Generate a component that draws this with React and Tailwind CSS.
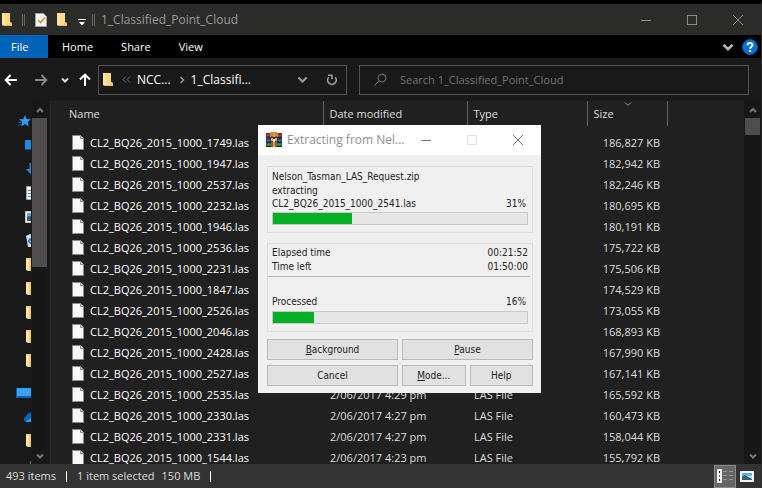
import React from "react";

const files = [
  { id: "1749", size: "186,827" },
  { id: "1947", size: "182,942" },
  { id: "2537", size: "182,246" },
  { id: "2232", size: "180,695" },
  { id: "1946", size: "180,191" },
  { id: "2536", size: "175,722" },
  { id: "2231", size: "175,506" },
  { id: "1847", size: "174,529" },
  { id: "2526", size: "173,055" },
  { id: "2046", size: "168,893" },
  { id: "2428", size: "167,990" },
  { id: "2527", size: "167,141" },
  { id: "2535", size: "165,592", date: "2/06/2017 4:29 pm", type: "LAS File" },
  { id: "2330", size: "160,473", date: "2/06/2017 4:27 pm", type: "LAS File" },
  { id: "2331", size: "158,044", date: "2/06/2017 4:27 pm", type: "LAS File" },
  { id: "1544", size: "155,792", date: "2/06/2017 4:23 pm", type: "LAS File" },
];

function Folder() {
  return (
    <svg width="12" height="14" viewBox="0 0 12 14" aria-hidden="true">
      <path d="M1 0h8v9l2 1v3H4l-3-1z" fill="#e9b960" />
      <path d="M1 0h8v12H1z" fill="#fbd98b" />
      <path d="M1 0l3 2v11l-3-1z" fill="#ffe3a0" />
      <path d="M9 9l2 1v3H8z" fill="#f3c46c" />
    </svg>
  );
}

function FileIcon() {
  return (
    <svg width="12" height="15" viewBox="0 0 12 15" className="shrink-0" aria-hidden="true">
      <path d="M.5.5h8l3 3v11H.5z" fill="#f8f8f8" stroke="#8d8d8d" />
      <path d="M8.5.5v3h3" fill="#d5d5d5" stroke="#8d8d8d" />
    </svg>
  );
}

function Chevron({ up = false, size = 8, width = 2, className = "" }) {
  return (
    <svg width={size} height={size} viewBox="0 0 8 8" className={className} aria-hidden="true">
      <path d={up ? "M1 6l3-3 3 3" : "M1 2.5l3 3 3-3"} fill="none" stroke="currentColor" strokeWidth={width} />
    </svg>
  );
}

function Arrow({ dir }) {
  return (
    <svg width="14" height="14" viewBox="0 0 14 14" aria-hidden="true">
      <g transform={dir === "right" ? "rotate(180 7 7)" : dir === "up" ? "rotate(90 7 7)" : undefined}>
        <path d="M13 7H2M6.5 2L1.700 7l4.800 5" fill="none" stroke="currentColor" strokeWidth="2" />
      </g>
    </svg>
  );
}

function Grip() {
  return <span className="h-3 w-[3px] border-x border-[#666]" />;
}

function TitleBar() {
  return (
    <header className="flex h-[31px] items-center bg-[#2b2b2a]">
      <div className="flex items-center pl-px">
        <Folder />
        <span className="ml-[9px] flex"><Grip /></span>
        <button aria-label="Properties" className="ml-[10px]">
          <svg width="12" height="14" viewBox="0 0 12 14">
            <path d="M.5.5h8l3 3v10H.5z" fill="#f6f6f6" stroke="#a0a0a0" />
            <path d="M3 7l2.500 2.500L10 4.500" fill="none" stroke="#e08a2c" strokeWidth="1.600" />
          </svg>
        </button>
        <button aria-label="New folder" className="ml-[9px]"><Folder /></button>
        <button aria-label="Customize Quick Access Toolbar" className="ml-[10px] pt-1 text-white">
          <svg width="8" height="8" viewBox="0 0 8 8">
            <path d="M0 1.500h8" stroke="currentColor" />
            <path d="M1 4h6L4 7.500z" fill="currentColor" />
          </svg>
        </button>
        <span className="ml-[6px] flex"><Grip /></span>
      </div>
      <h1 className="ml-[6px] flex-1 text-[12px] leading-4 text-[#9a9a9a]">1_Classified_Point_Cloud</h1>
      <div className="flex text-[#8c8c8c]">
        <button aria-label="Minimize" className="flex h-[31px] w-[46px] items-center justify-center">
          <svg width="10" height="10"><path d="M0 5.500h10" stroke="currentColor" /></svg>
        </button>
        <button aria-label="Maximize" className="flex h-[31px] w-[46px] items-center justify-center">
          <svg width="10" height="10"><rect x=".5" y=".5" width="9" height="9" fill="none" stroke="currentColor" /></svg>
        </button>
        <button aria-label="Close" className="flex h-[31px] w-[46px] items-center justify-center">
          <svg width="10" height="10"><path d="M0 0l10 10M10 0L0 10" stroke="currentColor" /></svg>
        </button>
      </div>
    </header>
  );
}

function Ribbon() {
  return (
    <nav className="flex h-[23px] items-center bg-black pr-[3px]">
      <a href="#file" className="flex h-full w-12 items-center bg-[#0063b8] pl-[11px]">File</a>
      <a href="#home" className="ml-[14px]">Home</a>
      <a href="#share" className="ml-7">Share</a>
      <a href="#view" className="ml-7">View</a>
      <button aria-label="Expand ribbon" className="ml-auto text-[#b4b4b4]"><Chevron size={12} width={1.7} /></button>
      <button aria-label="Help" className="ml-2">
        <svg width="16" height="16" viewBox="0 0 16 16">
          <circle cx="8" cy="8" r="7.500" fill="#0a6fc9" stroke="#0b58a0" />
          <path d="M5.600 6.200c0-3 4.900-3 4.900-.2 0 1.700-2.400 1.800-2.400 3.700" fill="none" stroke="#fff" strokeWidth="1.900" />
          <rect x="7.100" y="11" width="2" height="2" fill="#fff" />
        </svg>
      </button>
    </nav>
  );
}

function AddressRow() {
  return (
    <div className="flex h-[43px] items-center pr-3">
      <div className="flex w-[98px] items-center pl-1">
        <button aria-label="Back" className="text-white"><Arrow dir="left" /></button>
        <button aria-label="Forward" className="ml-4 text-[#8b8585]"><Arrow dir="right" /></button>
        <button aria-label="Recent locations" className="ml-[13px] text-[#dcdcdc]"><Chevron /></button>
        <button aria-label="Up" className="ml-[9px] text-white"><Arrow dir="up" /></button>
      </div>
      <div className="flex h-[30px] w-[249px] items-center border border-[#535353] pl-[3px] pr-2">
        <Folder />
        <svg width="9" height="7" viewBox="0 0 9 7" className="ml-2 text-[#6f6f6f]" aria-hidden="true">
          <path d="M4 .5l-3 3 3 3M8 .5l-3 3 3 3" fill="none" stroke="currentColor" />
        </svg>
        <a href="#ncc" className="ml-[6px] text-[12px]">NCC...</a>
        <span className="ml-[7px] flex -rotate-90 text-[#9a9a9a]"><Chevron size={8} width={1.5} /></span>
        <a href="#classified" className="ml-[5px] text-[12px]">1_Classifi...</a>
        <button aria-label="Previous locations" className="ml-auto text-[#9a9a9a]"><Chevron size={11} width={1.5} /></button>
        <button aria-label="Refresh" className="ml-[18px] text-[#9a9a9a]">
          <svg width="12" height="12" viewBox="0 0 12 12">
            <path d="M2.700 3.300a4.300 4.300 0 1 0 6.500 0" fill="none" stroke="currentColor" strokeWidth="1.700" />
            <path d="M2 1.200h4v4" fill="none" stroke="currentColor" strokeWidth="1.600" />
          </svg>
        </button>
      </div>
      <label className="ml-3 flex h-[30px] flex-1 items-center border border-[#535353] pl-[14px]">
        <svg width="13" height="13" viewBox="0 0 13 13" className="text-[#77717f]" aria-hidden="true">
          <circle cx="8" cy="5" r="4" fill="none" stroke="currentColor" />
          <path d="M5 8L.5 12.500" stroke="currentColor" />
        </svg>
        <input
          type="search"
          aria-label="Search 1_Classified_Point_Cloud"
          placeholder="Search 1_Classified_Point_Cloud"
          className="ml-[13px] min-w-0 flex-1 bg-transparent text-[11px] outline-none placeholder:text-[#777177]"
        />
      </label>
    </div>
  );
}

function QuickIcon({ kind }) {
  if (kind === "folder") {
    return (
      <svg width="14" height="14" viewBox="0 0 14 14" className="ml-[26px] shrink-0">
        <path d="M0 0h12v13H4L0 12z" fill="#f2c877" />
        <path d="M0 0l3 2v11l-3-1z" fill="#ffe7ab" />
      </svg>
    );
  }
  if (kind === "star") {
    return (
      <svg width="14" height="14" viewBox="0 0 14 14" className="ml-[18px] shrink-0">
        <path d="M7 1l1.700 4 4.300.3-3.300 2.700 1.100 4.500L7 10l-3.800 2.500L4.300 8 1 5.300 5.300 5z" fill="#2f9bf0" />
        <path d="M0 9l3-1M0 12l3-2" stroke="#1c5fa5" />
      </svg>
    );
  }
  if (kind === "desktop") {
    return <svg width="14" height="14" viewBox="0 0 14 14" className="ml-[25px] shrink-0"><path d="M0 2h14v10H0z" fill="#1d8ae6" /><path d="M0 11h14v1H0z" fill="#0b4f98" /></svg>;
  }
  if (kind === "download") {
    return <svg width="12" height="14" viewBox="0 0 12 14" className="ml-[26px] shrink-0"><path d="M3.500 1h4v6H11l-5.500 6L0 7h3.500z" fill="#2c86d9" /></svg>;
  }
  if (kind === "document") {
    return (
      <svg width="12" height="14" viewBox="0 0 12 14" className="ml-[26px] shrink-0">
        <path d="M.5.5h11v13H.5z" fill="#f4f4f4" stroke="#a5a5a5" />
        <path d="M2 4.500h8M2 7.500h8M2 10.500h8" stroke="#4a90c8" />
      </svg>
    );
  }
  if (kind === "picture") {
    return (
      <svg width="14" height="12" viewBox="0 0 14 12" className="ml-[25px] shrink-0">
        <path d="M.5.5h13v11H.5z" fill="#f4f4f4" stroke="#c5c5c5" />
        <path d="M2 2h10v8H2z" fill="#5aa9dc" />
        <path d="M2 6l3-1 7 3v2H2z" fill="#2e5d6b" />
      </svg>
    );
  }
  if (kind === "recycle") {
    return (
      <svg width="12" height="14" viewBox="0 0 12 14" className="ml-[26px] shrink-0">
        <path d="M0 2l4-2 7 2-1 11H2z" fill="#d9dde0" />
        <path d="M2 8l2-3 2 2M3 8l3 2" stroke="#1e78d0" strokeWidth="1.600" fill="none" />
      </svg>
    );
  }
  if (kind === "pc") {
    return <svg width="16" height="12" viewBox="0 0 16 12" className="ml-4 shrink-0"><path d="M0 1h16v10H0z" fill="#1161ad" /><path d="M1 1h15v8H1z" fill="#35a2f3" /></svg>;
  }
  if (kind === "network") {
    return <svg width="14" height="14" viewBox="0 0 14 14" className="ml-[30px] shrink-0"><path d="M0 3h12v10H0z" fill="#2b7fc9" /></svg>;
  }
  return <svg width="16" height="12" viewBox="0 0 16 12" className="ml-6 shrink-0"><path d="M3 11C-1 11-1 6 2 5.500 3 2 6 1 9 1v10z" fill="#0a63b5" /><path d="M1 11l7-5v5z" fill="#2e9af0" /></svg>;
}

const quickAccess = ["star", "desktop", "download", "document", "picture", "recycle", "folder", "folder", "folder", "folder", "folder"];
const locations = ["pc", "cloud", "folder", "network"];

function Sidebar() {
  return (
    <aside className="flex w-[50px] shrink-0">
      <div className="w-[31px] overflow-hidden pt-2">
        <ul>
          {quickAccess.map((k, i) => <li key={i} className="flex h-6 items-center"><QuickIcon kind={k} /></li>)}
        </ul>
        <ul className="mt-2">
          {locations.map((k) => <li key={k} className="flex h-6 items-center"><QuickIcon kind={k} /></li>)}
        </ul>
      </div>
      <div className="ml-px flex w-[15px] flex-col items-center bg-[#171717] text-[#777]">
        <button aria-label="Scroll navigation up" className="flex h-[17px] items-center justify-center"><Chevron up /></button>
        <div className="h-[149px] w-full bg-[#4e4c4c]" />
        <button aria-label="Scroll navigation down" className="mt-auto flex h-[17px] items-center justify-center"><Chevron /></button>
      </div>
    </aside>
  );
}

function FileTable() {
  return (
    <div className="min-w-0 flex-1 overflow-hidden border-l border-[#2b2b2b] bg-[#202020]">
      <table className="w-full table-fixed border-collapse text-left">
        <colgroup>
          <col className="w-[272px]" />
          <col className="w-36" />
          <col className="w-30" />
          <col className="w-20" />
          <col />
        </colgroup>
        <thead>
          <tr className="h-[25px]">
            <th className="border-r border-[#636363] pl-[18px] font-normal text-[#dedede]">Name</th>
            <th className="border-r border-[#636363] pl-[6px] font-normal text-[#dedede]">Date modified</th>
            <th className="border-r border-[#636363] pl-[6px] font-normal text-[#dedede]">Type</th>
            <th className="relative border-r border-[#636363] pl-[6px] font-normal text-[#dedede]">
              <Chevron size={8} width={1} className="absolute -top-px left-9 text-[#999]" />
              Size
            </th>
            <td />
          </tr>
        </thead>
        <tbody className="before:block before:h-[6px]">
          {files.map(({ id, size, date, type }) => (
            <tr key={id} className="h-[21px]">
              <td className="pl-[21px]">
                <span className="flex items-center gap-[6px] text-white"><FileIcon />CL2_BQ26_2015_1000_{id}.las</span>
              </td>
              <td className="pl-[7px] text-[#dedede]">{date}</td>
              <td className="pl-[7px] text-[#dedede]">{type}</td>
              <td className="pr-[7px] text-right text-[#dedede]">{size} KB</td>
              <td />
            </tr>
          ))}
        </tbody>
      </table>
    </div>
  );
}

function StatusBar() {
  return (
    <footer className="flex h-6 items-center bg-[#333] pl-[6px] pr-[7px] text-[#dedede]">
      <span>493 items</span>
      <span className="ml-[10px] h-[11px] w-px bg-white" />
      <span className="ml-[10px]">1 item selected</span>
      <span className="ml-[7px]">150 MB</span>
      <span className="ml-[10px] h-[11px] w-px bg-white" />
      <button aria-label="Details view" className="ml-auto flex h-[23px] w-[22px] items-center justify-center border border-[#8a8a8a] bg-[#666]">
        <svg width="16" height="14" viewBox="0 0 16 14">
          <path d="M0 0h5v14H0z" fill="#f2f2f2" />
          <path d="M2 2h1v2H2zM2 10h1v2H2z" fill="#222" />
          <path d="M2 6h1v2H2z" fill="#2b78c5" />
          <path d="M6 2.500h4M12 2.500h4M6 6.500h4M12 6.500h4M6 10.500h4M12 10.500h4" stroke="#969696" />
        </svg>
      </button>
      <button aria-label="Large icons view" className="ml-1">
        <svg width="14" height="11" viewBox="0 0 14 11">
          <path d="M0 0h14v11H0z" fill="#f5f5f5" />
          <path d="M2 2h10v7H2z" fill="#58ace5" />
          <path d="M2 6l3-2 7 4v1H2z" fill="#35626a" />
          <path d="M5 4l4 1 3-1v4z" fill="#b6dceb" />
        </svg>
      </button>
    </footer>
  );
}

function Progress({ value, label }) {
  return (
    <div role="progressbar" aria-label={label} aria-valuenow={value} aria-valuemin={0} aria-valuemax={100} className="h-[13px] border border-[#c9c9c9] bg-[#e6e6e6]">
      <div className="h-full bg-[#06b025]" style={{ width: value + "%" }} />
    </div>
  );
}

function DialogButton({ children, className = "" }) {
  return <button className={"h-[21px] border border-[#b9b9b9] bg-[#e1e1e1] text-center " + className}>{children}</button>;
}

function ExtractDialog() {
  return (
    <section
      role="dialog"
      aria-label="Extracting from Nelson_Tasman_LAS_Request.zip"
      className="absolute -top-1 left-[258px] mt-[125px] w-[283px] bg-[#f0f0f0] pb-[7px] font-['DejaVu_Sans_Condensed','DejaVu_Sans',sans-serif] text-[10px] leading-[14px] text-[#222]"
    >
      <div className="flex h-[30px] items-center bg-white pl-2">
        <svg width="16" height="16" viewBox="0 0 16 16" aria-hidden="true">
          <path d="M0 1h16v5H0z" fill="#8f2a2c" />
          <path d="M0 6h16v5H0z" fill="#25478f" />
          <path d="M0 11h16v4H0z" fill="#257a3c" />
          <path d="M0 5.500h16M0 10.500h16M0 14.500h16" stroke="#1c2434" />
          <path d="M1 3.500h4M11 3.500h4" stroke="#b5483e" />
          <path d="M1 8.500h3M12 8.500h3" stroke="#3f78b8" />
          <path d="M1 12.500h4M11 12.500h4" stroke="#3d9a4c" />
          <path d="M4 1l1-1h6l1 1v4H4z" fill="#c98545" />
          <path d="M5 4h6v11H5z" fill="#9c5a28" />
          <path d="M7 0h2v15H7z" fill="#dc9c54" />
          <path d="M4 5h8v5H4z" fill="#493225" />
          <path d="M5 6h2v3H5zM9 6h2v3H9z" fill="#c9b6a0" />
          <path d="M7 7h2v3H7z" fill="#ede1cf" />
        </svg>
        <h2 className="ml-[5px] w-[118px] whitespace-nowrap font-['Open_Sans','Noto_Sans',sans-serif] text-[12px] text-[#8f8f8f]">Extracting from Nel...</h2>
        <div className="flex flex-1 items-center justify-between pl-4 pr-[18px] text-[#777]">
          <button aria-label="Minimize"><svg width="10" height="10"><path d="M0 5.500h10" stroke="currentColor" /></svg></button>
          <button aria-label="Maximize" disabled className="text-[#e4e4e4]"><svg width="10" height="10"><rect x=".5" y=".5" width="9" height="9" fill="none" stroke="currentColor" /></svg></button>
          <button aria-label="Close"><svg width="10" height="10"><path d="M0 0l10 10M10 0L0 10" stroke="currentColor" /></svg></button>
        </div>
      </div>
      <div className="pl-[9px] pr-2 pt-[11px]">
        <div className="border border-[#dedede] px-1 pb-[7px] pt-[3px]">
          <p>Nelson_Tasman_LAS_Request.zip</p>
          <p className="h-[13px]">extracting</p>
          <div className="mb-px flex justify-between pr-[2px]"><span>CL2_BQ26_2015_1000_2541.las</span><span>31%</span></div>
          <Progress value={31} label="Current file" />
        </div>
        <div className="mt-[10px] border border-[#dedede] pb-[7px] pt-[2px]">
          <div className="flex justify-between px-1"><span>Elapsed time</span><span>00:21:52</span></div>
          <div className="flex justify-between px-1"><span>Time left</span><span>01:50:00</span></div>
          <div className="mr-[2px] mt-[2px] border-t border-[#b9b9b9]" />
          <div className="mb-[2px] mt-[18px] flex justify-between pl-1 pr-[6px]"><span>Processed</span><span>16%</span></div>
          <div className="px-1"><Progress value={16} label="Total" /></div>
        </div>
        <div className="mt-[7px] grid grid-cols-4 gap-x-1 gap-y-[5px]">
          <DialogButton className="col-span-2"><u>B</u>ackground</DialogButton>
          <DialogButton className="col-span-2"><u>P</u>ause</DialogButton>
          <DialogButton className="col-span-2">Cancel</DialogButton>
          <DialogButton><u>M</u>ode...</DialogButton>
          <DialogButton>Help</DialogButton>
        </div>
      </div>
    </section>
  );
}

export default function App() {
  return (
    <div className="relative flex h-screen flex-col overflow-hidden border-r border-t-4 border-r-[#2b2b2b] border-t-black bg-[#191919] font-['Open_Sans','Noto_Sans',sans-serif] text-[11px] leading-4 text-white">
      <TitleBar />
      <Ribbon />
      <AddressRow />
      <main className="flex min-h-0 flex-1">
        <Sidebar />
        <FileTable />
        <div className="flex w-[17px] flex-col items-center bg-[#171717] text-[#777]">
          <button aria-label="Scroll up" className="flex h-[17px] items-center justify-center"><Chevron up /></button>
          <div className="h-[17px] w-[15px] bg-[#4e4c4c]" />
          <button aria-label="Scroll down" className="mt-auto flex h-[17px] items-center justify-center"><Chevron /></button>
        </div>
      </main>
      <StatusBar />
      <ExtractDialog />
    </div>
  );
}
